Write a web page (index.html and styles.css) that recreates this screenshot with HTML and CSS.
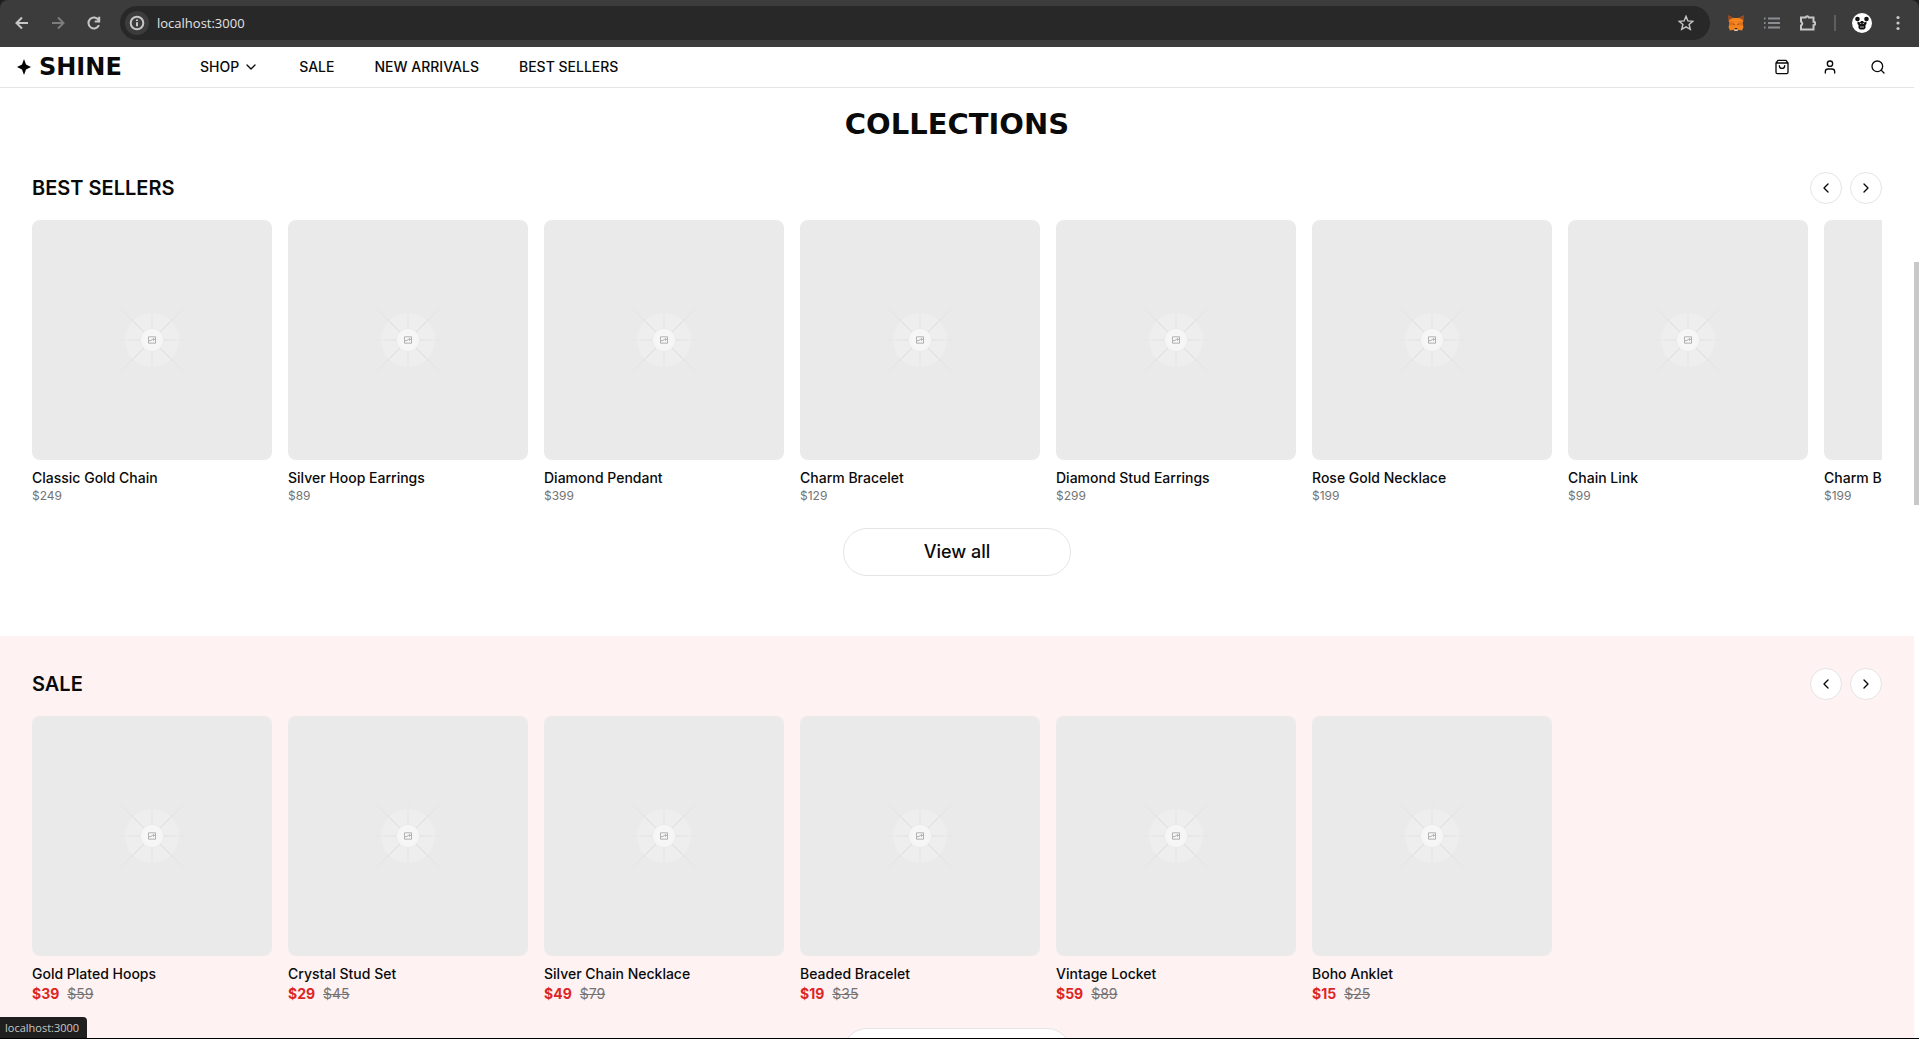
FILE: index.html
```html
<!DOCTYPE html>
<html lang="en">
<head>
<meta charset="utf-8">
<title>Shine</title>
<link rel="stylesheet" href="styles.css">
</head>
<body>
<svg class="sprite" aria-hidden="true">
  <defs>
    <linearGradient id="ray" gradientUnits="userSpaceOnUse" x1="-54" y1="0" x2="54" y2="0">
      <stop offset="0" stop-color="#dfdfdf" stop-opacity="0"/>
      <stop offset=".3" stop-color="#dfdfdf"/>
      <stop offset=".7" stop-color="#dfdfdf"/>
      <stop offset="1" stop-color="#dfdfdf" stop-opacity="0"/>
    </linearGradient>
    <linearGradient id="ray-short" gradientUnits="userSpaceOnUse" x1="-38" y1="0" x2="38" y2="0">
      <stop offset="0" stop-color="#e1e1e1" stop-opacity="0"/>
      <stop offset=".3" stop-color="#e1e1e1"/>
      <stop offset=".7" stop-color="#e1e1e1"/>
      <stop offset="1" stop-color="#e1e1e1" stop-opacity="0"/>
    </linearGradient>
  </defs>
  <symbol id="placeholder" viewBox="-120 -120 240 240">
    <circle r="27" fill="#eee"/>
    <g fill="url(#ray-short)">
      <rect x="-38" y="-.5" width="76" height="1"/>
      <rect x="-38" y="-.5" width="76" height="1" transform="rotate(90)"/>
    </g>
    <g fill="url(#ray)">
      <rect x="-54" y="-.5" width="108" height="1" transform="rotate(45)"/>
      <rect x="-54" y="-.5" width="108" height="1" transform="rotate(-45)"/>
    </g>
    <circle r="11.5" fill="#f6f6f6" stroke="#e4e4e4" stroke-width=".6"/>
    <path d="M-3.5-3.2h7v6.4h-7zM-3.5 1l2.500-.6 1.500-1 2.500.1M1.500-1.800v2.600" fill="none" stroke="#aaa" stroke-width=".9"/>
  </symbol>
  <symbol id="prev" viewBox="0 0 24 24"><path d="m15 18-6-6 6-6"/></symbol>
  <symbol id="next" viewBox="0 0 24 24"><path d="m9 18 6-6-6-6"/></symbol>
</svg>

<div class="toolbar">
  <button class="tool" aria-label="Back"><svg viewBox="0 0 16 16"><path d="M14 8H3M8 2.500 2.500 8 8 13.500"/></svg></button>
  <button class="tool tool-off" aria-label="Forward" disabled><svg viewBox="0 0 16 16"><path d="M2 8h11M8 2.500 13.500 8 8 13.500"/></svg></button>
  <button class="tool" aria-label="Reload"><svg viewBox="0 0 16 16"><path d="M13 10.200A5.500 5.500 0 1 1 12.600 5M13.200 1.800v4.700H8.700"/></svg></button>
  <div class="omnibox">
    <button class="site-info" aria-label="Site information"><svg viewBox="0 0 16 16"><circle cx="8" cy="8" r="6.300"/><path d="M8 7.200v4M8 4.500v1.500"/></svg></button>
    <label class="address"><input type="text" aria-label="Address" value="localhost:3000"></label>
    <button class="tool" aria-label="Bookmark"><svg viewBox="0 0 16 16"><path stroke-width="1.400" d="m8 1.300 1.900 4.600 5 .4-3.800 3.200 1.200 4.900L8 11.800l-4.300 2.600 1.200-4.900L1.100 6.300l5-.4z"/></svg></button>
  </div>
  <div class="extensions">
    <button class="tool" aria-label="Wallet"><svg viewBox="0 0 16 16" stroke="none"><path fill="#9c4d20" d="M0 0l6 3h4l6-3-.5 7H.5z"/><path fill="#f5841f" d="M1 5l4-2h6l4 2-.500 4L15.500 12 14 15.500l-3.500-.8L9.500 16h-3l-1-1.300L2 15.500.500 12 1.500 9z"/><path fill="#e2711c" d="M3 6l3 2-2 3-3-1zM13 6l-3 2 2 3 3-1z"/><path fill="#452316" d="M4.500 8.500l2 .8v.9zM11.500 8.500l-2 .8v.9zM7 13h2l.5 1.500h-3z"/><path fill="#d8ccc1" d="M6 14.500h4L9.500 16h-3z"/></svg></button>
    <button class="tool tool-dim" aria-label="Reading list"><svg viewBox="0 0 16 16"><path d="M4 3.500h12M4 8h12M4 12.500h12M0 3.500h1.500M0 8h1.500M0 12.500h1.500"/></svg></button>
    <button class="tool" aria-label="Extensions"><svg viewBox="0 0 16 16"><path d="M1 2.500h4.600a1.700 1.700 0 0 1 3.200 0h4.700v4.300a1.700 1.700 0 0 1 0 3.400v4.300H1v-4a2.200 2.200 0 0 0 0-4z"/></svg></button>
    <span class="divider"></span>
    <button class="avatar" aria-label="Profile"><svg viewBox="0 0 20 20"><circle cx="10" cy="10" r="10" fill="#fff"/><g fill="#111"><circle cx="5.500" cy="6" r="2.300"/><circle cx="14.500" cy="6" r="2.300"/><path d="M5.500 8.500 8 9.500 9 8h2l1 1.500 2.500-1v2.500l-1 1v3L12 16.500H8L6.500 15v-3l-1-1z"/></g><path d="M8 10.500h1.300M10.700 10.500H12M8 14h4" stroke="#c6d6d8" stroke-width=".8"/></svg></button>
    <button class="tool" aria-label="Menu"><svg viewBox="0 0 16 16" class="dots"><circle cx="8" cy="2.500" r="1.600"/><circle cx="8" cy="8" r="1.600"/><circle cx="8" cy="13.500" r="1.600"/></svg></button>
  </div>
</div>

<div class="viewport">
  <header class="site-header">
    <a class="logo" href="#"><svg viewBox="0 0 14 16"><path d="M7 0 9 5.500 14 8 9 10.500 7 16 5 10.500 0 8 5 5.500z"/></svg>SHINE</a>
    <nav class="nav">
      <a href="#">SHOP <svg class="icon" viewBox="0 0 24 24"><path d="m6 9 6 6 6-6"/></svg></a>
      <a href="#">SALE</a>
      <a href="#">NEW ARRIVALS</a>
      <a href="#">BEST SELLERS</a>
    </nav>
    <div class="actions">
      <button aria-label="Cart"><svg class="icon" viewBox="0 0 24 24"><path d="M6 2 3 6v14a2 2 0 0 0 2 2h14a2 2 0 0 0 2-2V6l-3-4ZM3 6h18M16 10a4 4 0 0 1-8 0"/></svg></button>
      <button aria-label="Account"><svg class="icon" viewBox="0 0 24 24"><path d="M19 21v-2a4 4 0 0 0-4-4H9a4 4 0 0 0-4 4v2"/><circle cx="12" cy="7" r="4"/></svg></button>
      <button aria-label="Search"><svg class="icon" viewBox="0 0 24 24"><circle cx="11" cy="11" r="8"/><path d="m21 21-4.300-4.300"/></svg></button>
    </div>
  </header>

  <main>
    <h1 class="page-title">COLLECTIONS</h1>

    <section class="collection">
      <div class="collection-head">
        <h2>BEST SELLERS</h2>
        <div class="arrows">
          <button aria-label="Previous"><svg class="icon"><use href="#prev"/></svg></button>
          <button aria-label="Next"><svg class="icon"><use href="#next"/></svg></button>
        </div>
      </div>
      <div class="track">
        <article class="card"><svg class="thumb"><use href="#placeholder"/></svg><h3>Classic Gold Chain</h3><p class="price">$249</p></article>
        <article class="card"><svg class="thumb"><use href="#placeholder"/></svg><h3>Silver Hoop Earrings</h3><p class="price">$89</p></article>
        <article class="card"><svg class="thumb"><use href="#placeholder"/></svg><h3>Diamond Pendant</h3><p class="price">$399</p></article>
        <article class="card"><svg class="thumb"><use href="#placeholder"/></svg><h3>Charm Bracelet</h3><p class="price">$129</p></article>
        <article class="card"><svg class="thumb"><use href="#placeholder"/></svg><h3>Diamond Stud Earrings</h3><p class="price">$299</p></article>
        <article class="card"><svg class="thumb"><use href="#placeholder"/></svg><h3>Rose Gold Necklace</h3><p class="price">$199</p></article>
        <article class="card"><svg class="thumb"><use href="#placeholder"/></svg><h3>Chain Link</h3><p class="price">$99</p></article>
        <article class="card"><svg class="thumb"><use href="#placeholder"/></svg><h3>Charm Bracelet</h3><p class="price">$199</p></article>
      </div>
      <button class="view-all">View all</button>
    </section>

    <section class="collection collection-sale">
      <div class="collection-head">
        <h2>SALE</h2>
        <div class="arrows">
          <button aria-label="Previous"><svg class="icon"><use href="#prev"/></svg></button>
          <button aria-label="Next"><svg class="icon"><use href="#next"/></svg></button>
        </div>
      </div>
      <div class="track">
        <article class="card"><svg class="thumb"><use href="#placeholder"/></svg><h3>Gold Plated Hoops</h3><p class="sale-price"><strong>$39</strong><s>$59</s></p></article>
        <article class="card"><svg class="thumb"><use href="#placeholder"/></svg><h3>Crystal Stud Set</h3><p class="sale-price"><strong>$29</strong><s>$45</s></p></article>
        <article class="card"><svg class="thumb"><use href="#placeholder"/></svg><h3>Silver Chain Necklace</h3><p class="sale-price"><strong>$49</strong><s>$79</s></p></article>
        <article class="card"><svg class="thumb"><use href="#placeholder"/></svg><h3>Beaded Bracelet</h3><p class="sale-price"><strong>$19</strong><s>$35</s></p></article>
        <article class="card"><svg class="thumb"><use href="#placeholder"/></svg><h3>Vintage Locket</h3><p class="sale-price"><strong>$59</strong><s>$89</s></p></article>
        <article class="card"><svg class="thumb"><use href="#placeholder"/></svg><h3>Boho Anklet</h3><p class="sale-price"><strong>$15</strong><s>$25</s></p></article>
      </div>
      <button class="view-all" aria-label="View all sale items"></button>
    </section>
  </main>
  <div class="scroll-thumb"></div>
  <div class="status">localhost:3000</div>
</div>
</body>
</html>
```
FILE: styles.css
```css
* { box-sizing: border-box; }

body {
  margin: 0;
  height: 100vh;
  display: flex;
  flex-direction: column;
  overflow: hidden;
  background: #1f1f1f;
  color: #0a0a0a;
  font-family: Inter, "Liberation Sans", sans-serif;
  font-size: 14px;
  line-height: 20px;
}

h1, h2, h3, p { margin: 0; }
a { color: inherit; text-decoration: none; }
button { padding: 0; border: 0; background: none; color: inherit; font: inherit; }
svg { display: block; }
.sprite { position: absolute; width: 0; height: 0; }

.icon {
  width: 16px;
  height: 16px;
  fill: none;
  stroke: currentColor;
  stroke-width: 2;
  stroke-linecap: round;
  stroke-linejoin: round;
}

/* Browser toolbar */
.toolbar {
  flex: none;
  display: flex;
  align-items: center;
  height: 47px;
  padding: 0 11px 1px 12px;
  gap: 16px;
  background: #3c3c3c;
  border-radius: 8px 8px 0 0;
  color: #c7c7c7;
}
.tool { flex: none; display: grid; place-items: center; width: 20px; height: 20px; }
.tool svg { width: 16px; height: 16px; fill: none; stroke: currentColor; stroke-width: 2; }
.tool .dots { fill: currentColor; stroke: none; }
.tool svg[stroke="none"] { stroke: none; }
.tool-off { color: #7c7c7c; }
.tool-dim { color: #8a8d91; }
.omnibox {
  flex: 1;
  display: flex;
  align-items: center;
  gap: 8px;
  height: 34px;
  padding: 0 14px 0 5px;
  border-radius: 17px;
  background: #282828;
}
.site-info { display: grid; place-items: center; width: 24px; height: 24px; border-radius: 50%; background: #3c3c3c; }
.site-info svg { width: 16px; height: 16px; fill: none; stroke: currentColor; stroke-width: 2; }
.address { flex: 1; }
.address input {
  display: block;
  width: 100%;
  padding: 0;
  border: 0;
  background: none;
  color: #e3e3e3;
  font: 13px/20px "Open Sans", "Noto Sans", sans-serif;
}
.extensions { display: flex; align-items: center; gap: 16px; }
.divider { width: 2px; height: 16px; background: #5e5e5e; }
.avatar svg { width: 20px; height: 20px; }

/* Page area */
.viewport {
  flex: 1;
  min-height: 0;
  position: relative;
  overflow: hidden;
  padding-right: 5px;
  background: #fff;
  border-bottom: 1px solid #000;
}
.scroll-thumb { position: absolute; top: 215px; right: 0; width: 5px; height: 243px; background: #c8c8c8; }
.status {
  position: absolute;
  left: 0;
  bottom: 0;
  padding: 1px 8px 0 5px;
  border-radius: 0 4px 0 0;
  background: #1f1f1f;
  color: #c7c7c7;
  font: 11px/20px "Open Sans", "Noto Sans", sans-serif;
}

.site-header {
  display: flex;
  align-items: center;
  padding: 0 28px 0 17px;
  height: 41px;
  border-bottom: 1px solid #e5e5e5;
  font-weight: 500;
}
.logo { display: flex; align-items: center; gap: 8px; width: 183px; font: 700 24px/28px "DejaVu Sans", sans-serif; }
.logo svg { width: 14px; height: 16px; }
.nav { flex: 1; display: flex; gap: 40px; }
.nav a { display: flex; align-items: center; gap: 4px; }
.actions { display: flex; gap: 32px; }

.page-title {
  padding: 20px 0 32px;
  text-align: center;
  font: 700 29px/32px "DejaVu Sans", sans-serif;
}

.collection { padding: 0 32px 60px; }
.collection-sale { padding-top: 32px; background: #fef2f2; }
.collection-head { display: flex; align-items: center; justify-content: space-between; margin-bottom: 16px; }
.collection-head h2 { font-size: 20px; font-weight: 600; line-height: 28px; }
.arrows { display: flex; gap: 8px; }
.arrows button {
  display: grid;
  place-items: center;
  width: 32px;
  height: 32px;
  border: 1px solid #e5e5e5;
  border-radius: 50%;
  background: #fff;
}

.track { display: flex; gap: 16px; overflow: hidden; }
.card { flex: none; width: 240px; }
.thumb { width: 100%; height: 240px; margin-bottom: 8px; border-radius: 8px; background: #eaeaea; }
.card h3 { font-size: 14px; font-weight: 500; line-height: 20px; white-space: nowrap; }
.price { font-size: 12px; line-height: 16px; color: #737373; }
.sale-price { display: flex; gap: 8px; }
.sale-price strong { font-weight: 700; color: #dc2626; }
.sale-price s { color: #737373; }

.view-all {
  display: block;
  width: 228px;
  height: 48px;
  margin: 24px auto 0;
  border: 1px solid #e5e5e5;
  border-radius: 24px;
  background: #fff;
  font-size: 18px;
  font-weight: 500;
}
```
